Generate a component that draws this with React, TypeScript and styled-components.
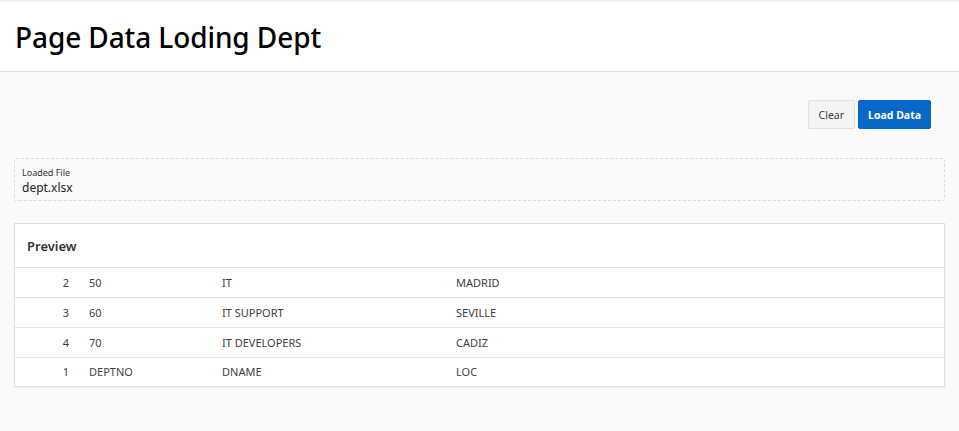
import React from 'react';
import styled, { createGlobalStyle } from 'styled-components';

const GlobalStyle = createGlobalStyle`
  html, body {
    margin: 0;
    padding: 0;
    background: #fafafa;
    font-family: 'Noto Sans', 'Open Sans', sans-serif;
    color: #000;
  }
`;

const rows = [
  { n: 2, deptno: '50', dname: 'IT', loc: 'MADRID' },
  { n: 3, deptno: '60', dname: 'IT SUPPORT', loc: 'SEVILLE' },
  { n: 4, deptno: '70', dname: 'IT DEVELOPERS', loc: 'CADIZ' },
  { n: 1, deptno: 'DEPTNO', dname: 'DNAME', loc: 'LOC' },
];

export default function App() {
  return (
    <>
      <GlobalStyle />
      <Page>
        <Header>
          <Title>Page Data Loding Dept</Title>
        </Header>
        <Body>
          <ButtonBar>
            <Button>Clear</Button>
            <Button primary>Load Data</Button>
          </ButtonBar>
          <FileBox>
            <FileLabel>Loaded File</FileLabel>
            <FileName>dept.xlsx</FileName>
          </FileBox>
          <Region>
            <RegionHeader>Preview</RegionHeader>
            <Table>
              <tbody>
                {rows.map((r) => (
                  <Row key={r.n}>
                    <NumCell>{r.n}</NumCell>
                    <Cell width={133}>{r.deptno}</Cell>
                    <Cell width={234}>{r.dname}</Cell>
                    <Cell>{r.loc}</Cell>
                  </Row>
                ))}
              </tbody>
            </Table>
          </Region>
        </Body>
      </Page>
    </>
  );
}

const Page = styled.div`
  min-height: 431px;
  border-top: 2px solid #f4f4f4;
`;

const Header = styled.header`
  background: #fff;
  border-bottom: 1px solid #e0e0e0;
  height: 69px;
  display: flex;
  align-items: center;
  padding: 0 15px;
`;

const Title = styled.h1`
  margin: 0;
  font-size: 28px;
  font-weight: 500;
  color: #000;
  letter-spacing: -0.1px;
`;

const Body = styled.main`
  padding: 28px 14px 0 14px;
`;

const ButtonBar = styled.div`
  display: flex;
  justify-content: flex-end;
  gap: 3px;
  padding-right: 14px;
`;

const Button = styled.button<{ primary?: boolean }>`
  height: 29px;
  padding: 0 ${({ primary }) => (primary ? 9 : 10)}px;
  border-radius: 2px;
  font-family: inherit;
  font-size: 10.5px;
  font-weight: ${({ primary }) => (primary ? 700 : 400)};
  color: ${({ primary }) => (primary ? '#fff' : '#404040')};
  background: ${({ primary }) => (primary ? '#0868c7' : '#f5f5f5')};
  border: 1px solid ${({ primary }) => (primary ? '#0868c7' : '#e2e2e2')};
  cursor: pointer;
`;

const FileBox = styled.div`
  margin-top: 29px;
  height: 43px;
  box-sizing: border-box;
  border: 1px dashed #dcdcdc;
  border-radius: 2px;
  padding: 7px 7px 0;
`;

const FileLabel = styled.div`
  font-size: 9px;
  color: #333;
  line-height: 13px;
`;

const FileName = styled.div`
  font-size: 12px;
  color: #222;
  line-height: 18px;
`;

const Region = styled.section`
  margin-top: 22px;
  background: #fff;
  border: 1px solid #e0e0e0;
  box-shadow: 0 1px 2px rgba(0, 0, 0, 0.05);
`;

const RegionHeader = styled.div`
  height: 43px;
  display: flex;
  align-items: center;
  padding: 0 12px;
  font-size: 13px;
  font-weight: 600;
  color: #333;
  border-bottom: 1px solid #e4e4e4;
`;

const Table = styled.table`
  width: 100%;
  border-collapse: collapse;
  font-size: 11px;
  color: #404040;
`;

const Row = styled.tr`
  height: 30px;
  border-top: 1px solid #e4e4e4;

  &:first-child {
    border-top: none;
    height: 29px;
  }

  &:last-child {
    height: 29px;
  }
`;

const NumCell = styled.td`
  width: 54px;
  text-align: right;
  padding: 0 20px 0 0;
`;

const Cell = styled.td<{ width?: number }>`
  width: ${({ width }) => (width ? `${width}px` : 'auto')};
  padding: 0;
`;
